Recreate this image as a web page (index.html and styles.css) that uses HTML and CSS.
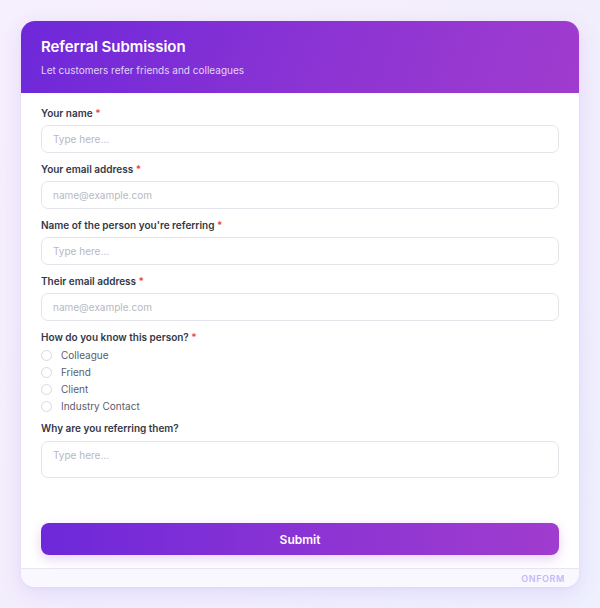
FILE: index.html
```html
<!DOCTYPE html>
<html>
<head>
<meta charset="utf-8">
<link rel="stylesheet" href="styles.css">
</head>
<body>
<div class="page">
  <div class="card">
    <div class="header">
      <h1 class="title">Referral Submission</h1>
      <p class="subtitle">Let customers refer friends and colleagues</p>
    </div>
    <div class="body">
      <div class="field">
        <label class="label">Your name <span class="req">*</span></label>
        <div class="input">Type here...</div>
      </div>
      <div class="field">
        <label class="label">Your email address <span class="req">*</span></label>
        <div class="input">name@example.com</div>
      </div>
      <div class="field">
        <label class="label">Name of the person you're referring <span class="req">*</span></label>
        <div class="input">Type here...</div>
      </div>
      <div class="field">
        <label class="label">Their email address <span class="req">*</span></label>
        <div class="input">name@example.com</div>
      </div>
      <div class="field">
        <label class="label">How do you know this person? <span class="req">*</span></label>
        <div class="radios">
          <div class="radio"><span class="circle"></span>Colleague</div>
          <div class="radio"><span class="circle"></span>Friend</div>
          <div class="radio"><span class="circle"></span>Client</div>
          <div class="radio"><span class="circle"></span>Industry Contact</div>
        </div>
      </div>
      <div class="field">
        <label class="label label-last">Why are you referring them?</label>
        <div class="input textarea">Type here...</div>
      </div>
      <div class="actions">
        <button class="submit">Submit</button>
      </div>
    </div>
    <div class="footer"><span class="brand">ONFORM</span></div>
  </div>
</div>
</body>
</html>
```
FILE: styles.css
```css
* { box-sizing: border-box; }
html, body { margin: 0; padding: 0; }
body {
  font-family: Inter, "Noto Sans", sans-serif;
  width: 600px;
  height: 608px;
  overflow: hidden;
  background: linear-gradient(135deg, #f6effd 0%, #f3eefc 50%, #eef0fd 100%);
}
.page {
  padding: 21px 21px;
}
.card {
  background: #fff;
  border-radius: 14px;
  overflow: hidden;
  box-shadow: 0 6px 22px rgba(124, 58, 237, 0.12), 0 1px 3px rgba(124, 58, 237, 0.06);
}
.header {
  height: 72px;
  padding: 17px 20px 0;
  background: linear-gradient(110deg, #6d28d9 0%, #8a33d4 50%, #a03cce 100%);
  color: #fff;
}
.title {
  margin: 0;
  font-size: 15px;
  font-weight: 600;
  line-height: 18px;
  letter-spacing: -0.05px;
}
.subtitle {
  margin: 8px 0 0;
  font-size: 10px;
  line-height: 12px;
  color: rgba(255, 255, 255, 0.8);
}
.body {
  padding: 14px 20px 13px;
  display: flex;
  flex-direction: column;
  gap: 10px;
}
.field {
  display: flex;
  flex-direction: column;
}
.label {
  font-size: 10px;
  font-weight: 600;
  line-height: 12px;
  color: #343747;
  margin-bottom: 6px;
}
.label-last { margin-bottom: 7px; }
.req { color: #ef4444; }
.input {
  height: 28px;
  border: 1.5px solid #e4e4ea;
  border-radius: 7px;
  padding: 0 11px;
  display: flex;
  align-items: center;
  font-size: 10px;
  color: #b8b8c2;
}
.textarea {
  height: 37px;
  align-items: flex-start;
  padding-top: 7px;
}
.radios {
  display: flex;
  flex-direction: column;
  gap: 5px;
  margin-top: 0;
}
.radio {
  display: flex;
  align-items: center;
  height: 12px;
  font-size: 10px;
  color: #5b5d68;
}
.circle {
  width: 11px;
  height: 11px;
  border: 1.3px solid #d9d9e0;
  border-radius: 50%;
  margin-right: 9px;
}
.actions {
  padding-top: 35px;
}
.submit {
  width: 100%;
  height: 32px;
  border: none;
  border-radius: 8px;
  background: linear-gradient(90deg, #6d28d9 0%, #8a33d4 50%, #a03cce 100%);
  color: #fff;
  font-family: Inter, "Noto Sans", sans-serif;
  font-size: 12px;
  font-weight: 600;
  box-shadow: 0 4px 12px rgba(139, 51, 212, 0.22);
}
.footer {
  border-top: 1px solid #e8e6ef;
  background: #faf8ff;
  height: 19px;
  display: flex;
  justify-content: flex-end;
  align-items: center;
  padding: 0 14px;
}
.brand {
  font-size: 9px;
  font-weight: 600;
  letter-spacing: 0.6px;
  color: #c4b8fb;
}
```
